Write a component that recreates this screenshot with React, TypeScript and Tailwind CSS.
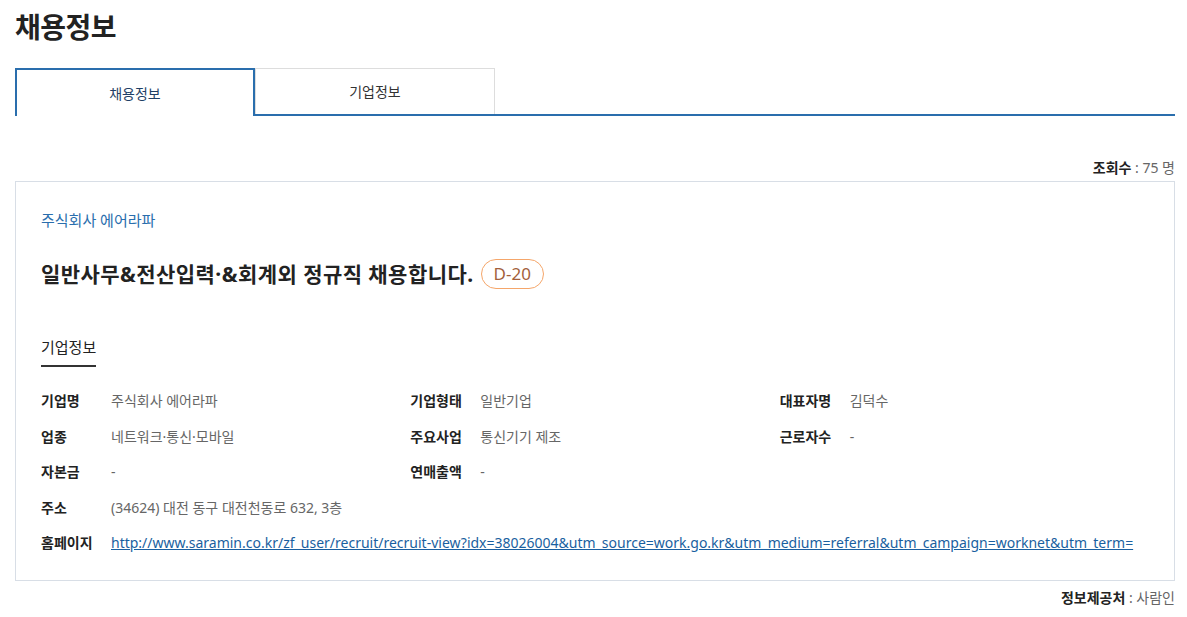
import React from "react";

const rows: [string, string][][] = [
  [["기업명", "주식회사 에어라파"], ["기업형태", "일반기업"], ["대표자명", "김덕수"]],
  [["업종", "네트워크·통신·모바일"], ["주요사업", "통신기기 제조"], ["근로자수", "-"]],
  [["자본금", "-"], ["연매출액", "-"]],
];

function Item({ label, value }: { label: string; value: string }) {
  return (
    <div className="flex items-center">
      <span className="w-[70px] shrink-0 font-bold text-[#222]">{label}</span>
      <span className="text-[#666]">{value}</span>
    </div>
  );
}

export default function App() {
  return (
    <div
      className="bg-white w-[1187px] px-[15px] pb-4 text-[14px] text-[#333]"
      style={{ fontFamily: '"Noto Sans", "Noto Sans CJK KR", sans-serif' }}
    >
      <h1 className="pt-[8px] text-[28px] font-bold leading-[38px] text-[#222] tracking-[-0.5px]">채용정보</h1>

      <div className="mt-[22px] flex border-b-2 border-[#2a6ead] w-[1160px]">
        <div className="w-[240px] h-[48px] -mb-[2px] border-2 border-b-0 border-[#2a6ead] bg-white flex items-center justify-center text-[14px] text-[#1f3f66]">
          채용정보
        </div>
        <div className="w-[240px] h-[46px] border border-b-0 border-[#dddddd] flex items-center justify-center text-[14px] text-[#333]">
          기업정보
        </div>
      </div>

      <div className="mt-[42px] text-right text-[14px] leading-[20px] w-[1160px]">
        <span className="font-bold text-[#222]">조회수</span>
        <span className="text-[#666]"> : 75 명</span>
      </div>

      <div className="mt-[3px] w-[1160px] border border-[#d8dee6] px-[25px] pt-[27px] pb-[26px]">
        <div className="text-[15px] leading-[22px] text-[#2a6ead]">주식회사 에어라파</div>
        <div className="mt-[28px] flex items-center gap-[7px]">
          <span className="text-[21px] font-bold text-[#222] leading-[30px] tracking-[0.45px]">일반사무&전산입력·&회계외 정규직 채용합니다.</span>
          <span className="h-[30px] px-[12px] rounded-full border border-[#f5a66a] text-[#a35f3c] text-[17px] flex items-center">D-20</span>
        </div>

        <div className="mt-[48px] inline-block border-b-2 border-[#333] pb-[8px] text-[15px] leading-[20px] text-[#222]">기업정보</div>

        <div className="mt-[23px] flex flex-col gap-[13.5px] leading-[22px]">
          {rows.map((r, i) => (
            <div key={i} className="grid grid-cols-3">
              {r.map(([l, v]) => (
                <Item key={l} label={l} value={v} />
              ))}
            </div>
          ))}
          <Item label="주소" value="(34624) 대전 동구 대전천동로 632, 3층" />
          <div className="flex items-center">
            <span className="w-[70px] shrink-0 font-bold text-[#222]">홈페이지</span>
            <a className="text-[#1a5fa0] underline" href="#">
              http://www.saramin.co.kr/zf_user/recruit/recruit-view?idx=38026004&amp;utm_source=work.go.kr&amp;utm_medium=referral&amp;utm_campaign=worknet&amp;utm_term=
            </a>
          </div>
        </div>
      </div>

      <div className="mt-[7px] text-right text-[14px] leading-[20px] w-[1160px]">
        <span className="font-bold text-[#222]">정보제공처</span>
        <span className="text-[#666]"> : 사람인</span>
      </div>
    </div>
  );
}
